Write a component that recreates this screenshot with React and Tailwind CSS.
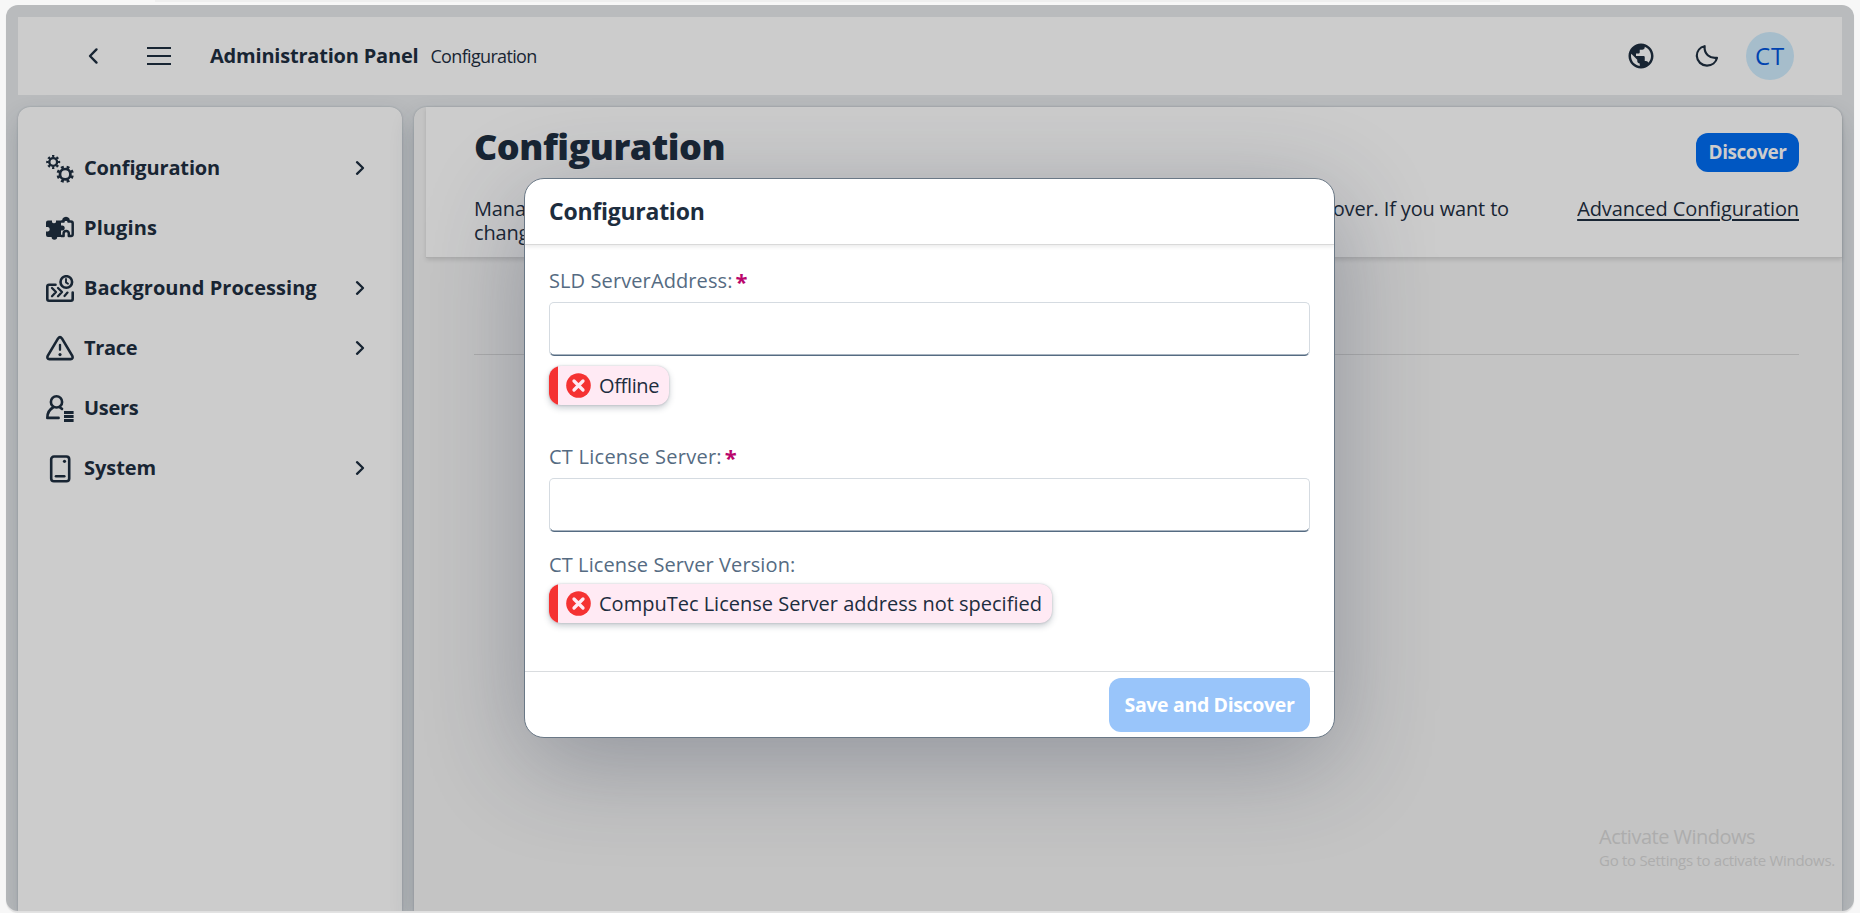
import React from 'react';
import { MdPublic } from 'react-icons/md';

const Gears = () => (
  <svg width="28" height="28" viewBox="0 0 28 28" fill="none" stroke="currentColor">
    <circle cx="7.2" cy="7" r="3.9" strokeWidth="2.4" />
    <circle cx="7.2" cy="7" r="5.7" strokeWidth="2.6" pathLength="16" strokeDasharray="1 1" strokeDashoffset="0.5" />
    <circle cx="19.2" cy="19.2" r="5.2" strokeWidth="2.7" />
    <circle cx="19.2" cy="19.2" r="7.2" strokeWidth="3" pathLength="16" strokeDasharray="1 1" strokeDashoffset="-0.5" />
  </svg>
);

const Puzzle = () => (
  <svg width="28" height="28" viewBox="0 0 28 28" fill="none">
    <path d="M2 5.5H6V7.2a2.4 2.4 0 0 0 4 0V5.5H15V10.5h1.2a2.5 2.5 0 1 1 0 5H15V22H11.2a2.8 2.8 0 1 1-5.6 0H2Q0 22 0 20V16.5H2a2.4 2.4 0 0 0 0-4.6H0V7.5Q0 5.5 2 5.5Z" fill="currentColor" />
    <path d="M15 6.5H17.6A2.6 2.6 0 1 1 22.4 6.5H25Q26.7 6.5 26.7 8.2V19.2Q26.7 21 25 21H22.8V18.5a2.6 2.6 0 0 0-5.2 0V21H15" stroke="currentColor" strokeWidth="2.5" strokeLinejoin="round" />
    <path d="M17.8 6a2.3 2.3 0 1 1 4.4 0Z" fill="currentColor" />
  </svg>
);

const Processing = () => (
  <svg width="28" height="28" viewBox="0 0 28 28" fill="none" stroke="currentColor" strokeWidth="2.6" strokeLinecap="round" strokeLinejoin="round">
    <path d="M9.5 9.7H3Q1.3 9.7 1.3 11.4V24Q1.3 25.7 3 25.7H25Q26.7 25.7 26.7 24V17.5" />
    <circle cx="20.3" cy="7" r="5.8" />
    <path d="M20 4V7.4L22 8.8" strokeWidth="1.9" />
    <path d="M6 13l4 4-4 4.2M12 13l4 4-4 4.2M18.5 21l3-3.4" strokeWidth="2.3" />
  </svg>
);

const Warning = () => (
  <svg width="28" height="28" viewBox="0 0 28 28" fill="none" stroke="currentColor" strokeWidth="2.6" strokeLinecap="round" strokeLinejoin="round">
    <path d="M12.1 3.4Q14 .8 15.9 3.4L26.3 20.8Q27.4 24 24.6 24.1H3.4Q.6 24 1.7 20.8Z" />
    <path d="M14 9.8v5" strokeWidth="2.3" />
    <circle cx="14" cy="19.6" r="1.6" fill="currentColor" stroke="none" />
  </svg>
);

const Users = () => (
  <svg width="28" height="28" viewBox="0 0 28 28" fill="none" stroke="currentColor" strokeWidth="2.6" strokeLinecap="round">
    <circle cx="10.5" cy="6.9" r="5.6" />
    <path d="M7 12.5C3.4 14.5 1.3 18 1.3 22.9H12.6M14 12.5l2 1.4" strokeLinejoin="round" />
    <path d="M18 17.5H27.6M18 21.5H27.6M18 25.5H27.6" strokeLinecap="butt" strokeWidth="2.8" />
  </svg>
);

const Device = () => (
  <svg width="28" height="28" viewBox="0 0 28 28" fill="none" stroke="currentColor" strokeWidth="2.6" strokeLinecap="round">
    <rect x="5.2" y="1.5" width="18" height="24.8" rx="2.8" />
    <path d="M10 21.3H18.3" />
    <circle cx="18.5" cy="6.3" r="1.6" fill="currentColor" stroke="none" />
  </svg>
);

const Chevron = () => (
  <svg width="10" height="16" viewBox="0 0 10 16" fill="none" stroke="currentColor" strokeWidth="2.3" strokeLinecap="round" strokeLinejoin="round">
    <path d="M2 2.2L8 8L2 13.8" />
  </svg>
);

const items = [
  { label: 'Configuration', icon: Gears, more: true, track: 'tracking-[-0.15px]' },
  { label: 'Plugins', icon: Puzzle, more: false, track: 'tracking-[0.1px]' },
  { label: 'Background Processing', icon: Processing, more: true, track: 'tracking-[0.05px]' },
  { label: 'Trace', icon: Warning, more: true, track: 'tracking-[-0.3px]' },
  { label: 'Users', icon: Users, more: false, track: 'tracking-[-0.3px]' },
  { label: 'System', icon: Device, more: true, track: 'tracking-[-0.05px]' },
];

const Field = ({ label, track }) => (
  <div>
    <label className={'flex h-6 items-center gap-[3px] text-[20px] leading-6 text-[#556b82] ' + track}>
      <span>{label}</span>
      <span className="text-[22px] leading-6 font-bold text-[#ba066c]">*</span>
    </label>
    <input className="mt-[9px] block h-[54px] w-full rounded-[5px] border border-[#d5dbe1] border-b-[#556b82] bg-white px-3 shadow-[inset_0_-1px_0_-0.4px_#556b82] outline-none" />
  </div>
);

const Status = ({ children, track }) => (
  <div className="flex h-[39px] w-fit items-center overflow-hidden rounded-[12px] bg-[#ffeaf4] pr-[10px] shadow-[0_0_2px_rgba(34,53,72,0.25),0_3px_6px_rgba(34,53,72,0.25)]">
    <span className="h-full w-[9px] bg-[#f53232]" />
    <svg className="ml-[8px]" width="25" height="25" viewBox="0 0 25 25">
      <circle cx="12.5" cy="12.5" r="12.3" fill="#f53232" />
      <path d="M8 8l9 9M17 8l-9 9" stroke="#ffeaf4" strokeWidth="3.3" strokeLinecap="round" />
    </svg>
    <span className={'ml-[8px] text-[20px] leading-6 whitespace-nowrap text-[#1d2d3e] ' + track}>{children}</span>
  </div>
);

export default function App() {
  return (
    <div className="relative h-[913px] w-[1860px] overflow-hidden bg-[#f7f7f7] pt-[5px] pl-[6px] font-['Open_Sans','Noto_Sans',sans-serif] text-[#182533]">
      <div className="absolute top-0 left-[155px] h-[2px] w-[1345px] bg-[#efefef]" />
      <div className="flex h-[906px] w-[1848px] flex-col gap-3 overflow-hidden rounded-[12px] bg-[#b9bbbd] px-3 pt-3 shadow-[0_2px_1px_#e0e0e0]">
        <header className="relative z-10 flex h-[78px] shrink-0 items-center bg-[#ccc] pr-[48px] pl-[69px]">
          <svg width="12" height="18" viewBox="0 0 12 18" fill="none" stroke="currentColor" strokeWidth="2.4" strokeLinecap="round" strokeLinejoin="round">
            <path d="M9.5 2.4L3 9L9.5 15.6" />
          </svg>
          <svg className="ml-[48px]" width="24" height="18" viewBox="0 0 24 18" stroke="currentColor" strokeWidth="2">
            <path d="M0 1H24M0 9H24M0 17H24" />
          </svg>
          <span className="ml-[39px] text-[20px] leading-6 font-bold tracking-[-0.2px] whitespace-nowrap">Administration Panel</span>
          <span className="ml-[12px] text-[18px] leading-6 tracking-[-0.67px] whitespace-nowrap">Configuration</span>
          <div className="ml-auto flex items-center">
            <MdPublic className="size-[30px]" />
            <svg className="ml-[39px]" width="24" height="24" viewBox="0 0 24 24" fill="none" stroke="currentColor" strokeWidth="2.2" strokeLinejoin="round">
              <path d="M9.6 2.2C5 3.2 1.8 7 1.8 12A10.2 10.2 0 0 0 12 21.6C17 21.6 21 18.4 22 13.8C14.5 14.8 9 9.8 9.6 2.2Z" />
            </svg>
            <div className="ml-[27px] flex size-[48px] items-center justify-center rounded-full bg-[#a6bdcb] text-[24px] leading-6 tracking-[0.8px] text-[#0043b0]">CT</div>
          </div>
        </header>

        <div className="flex min-h-0 flex-1 gap-3">
          <aside className="w-[384px] rounded-t-[12px] bg-[#ccc] pt-[31px] shadow-[0_0_2px_rgba(34,53,72,0.3),0_12px_24px_rgba(34,53,72,0.2)]">
            {items.map(({ label, icon: Icon, more, track }) => (
              <div key={label} className="flex h-[60px] items-center pr-[37px] pl-[28px]">
                <span className="mt-[1px]"><Icon /></span>
                <span className={'ml-[10px] text-[20px] leading-6 font-bold whitespace-nowrap ' + track}>{label}</span>
                {more && <span className="ml-auto"><Chevron /></span>}
              </div>
            ))}
          </aside>

          <main className="w-[1428px] rounded-t-[12px] bg-[#c4c4c4] pl-3 shadow-[0_0_2px_rgba(34,53,72,0.3),0_12px_24px_rgba(34,53,72,0.2)]">
            <section className="h-[151px] rounded-tr-[12px] border-b border-[#aeaeae] bg-[#ccc] pr-[43px] pl-[48px] shadow-[0_2px_4px_rgba(0,0,0,0.12)]">
              <div className="flex items-start justify-between">
                <h1 className="pt-[20px] text-[36px] leading-[40px] font-extrabold tracking-[-0.5px]">Configuration</h1>
                <button className="mt-[26px] h-[39px] w-[103px] rounded-[12px] bg-[#0057c2] pb-[1px] text-[19px] font-bold tracking-[-0.45px] text-[#ccc]">Discover</button>
              </div>
              <div className="mt-[25px] flex justify-between text-[20px] leading-6">
                <div className="w-[1035px] tracking-[-0.15px]">
                  <div className="flex justify-between whitespace-nowrap">
                    <span>Manage</span>
                    <span>Discover. If you want to</span>
                  </div>
                  <div>change</div>
                </div>
                <a className="tracking-[-0.1px] whitespace-nowrap underline decoration-2 underline-offset-[3px]">Advanced Configuration</a>
              </div>
            </section>
            <div className="mr-[43px] ml-[48px] h-[97px] border-b border-[#acacac]" />
          </main>
        </div>
      </div>

      <div className="absolute top-[178px] left-[524px] flex h-[560px] w-[811px] flex-col overflow-hidden rounded-[20px] border border-[#6a7886] bg-white shadow-[0_24px_100px_rgba(36,46,72,0.32)]">
        <div className="relative flex h-[66px] shrink-0 items-center border-b border-[#d9d9d9] pl-[24px] shadow-[0_2px_4px_rgba(0,0,0,0.08)]">
          <h2 className="pb-[2px] text-[23px] leading-6 font-bold tracking-[-0.25px] text-[#1d2d3e]">Configuration</h2>
        </div>
        <div className="flex-1 px-[24px] pt-[24px]">
          <Field label="SLD ServerAddress:" track="tracking-[0.1px]" />
          <div className="mt-[10px]"><Status track="tracking-[-0.35px]">Offline</Status></div>
          <div className="mt-[40px]"><Field label="CT License Server:" track="tracking-[0.25px]" /></div>
          <div className="mt-[21px] text-[20px] leading-6 tracking-[0.1px] text-[#556b82]">CT License Server Version:</div>
          <div className="mt-[7px]"><Status track="tracking-[0px]">CompuTec License Server address not specified</Status></div>
        </div>
        <div className="flex h-[66px] shrink-0 items-center justify-end border-t border-[#d9dcdf] pr-[24px]">
          <button className="h-[54px] w-[201px] rounded-[12px] bg-[#99c5fa] text-[19.5px] font-bold tracking-[-0.35px] text-white">Save and Discover</button>
        </div>
      </div>

      <div className="absolute top-[824px] left-[1599px] whitespace-nowrap text-[#adadad]">
        <div className="text-[20px] leading-[26px] tracking-[-0.5px]">Activate Windows</div>
        <div className="text-[15px] leading-[20px] tracking-[-0.28px]">Go to Settings to activate Windows.</div>
      </div>
    </div>
  );
}
